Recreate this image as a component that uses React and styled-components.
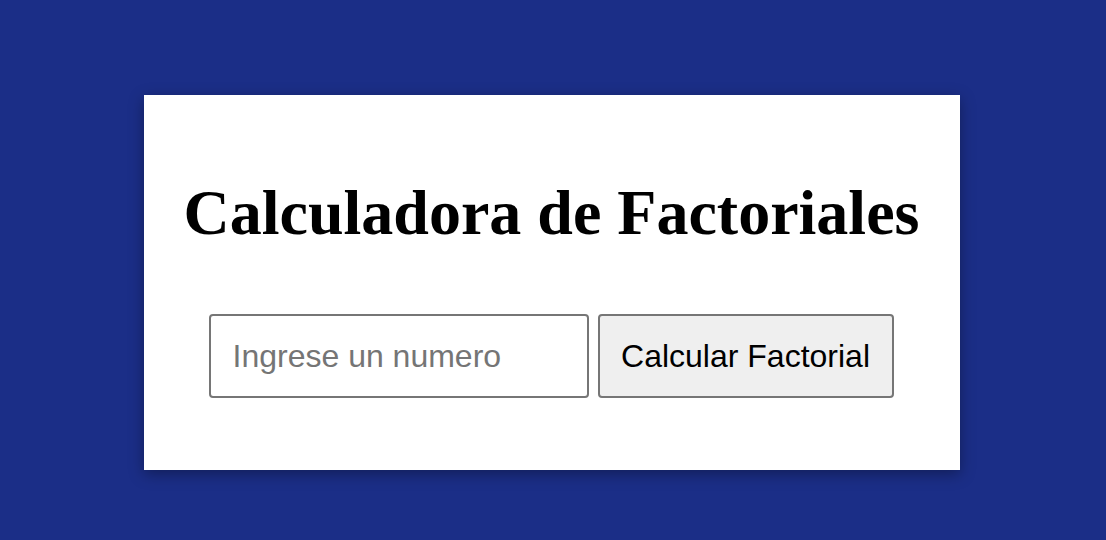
import React, { useState } from "react";
import styled, { createGlobalStyle } from "styled-components";

const GlobalStyle = createGlobalStyle`
  html, body {
    margin: 0;
    padding: 0;
    background-color: #1b2e87;
  }
`;

const Page = styled.div`
  min-height: 540px;
  display: flex;
  justify-content: center;
  align-items: flex-start;
  padding: 95px 2px 0 0;
  box-sizing: border-box;
`;

const Card = styled.div`
  width: 816px;
  height: 375px;
  background: #ffffff;
  box-shadow: 0 4px 14px rgba(0, 0, 0, 0.35);
  display: flex;
  flex-direction: column;
  align-items: center;
  box-sizing: border-box;
  padding-top: 78px;
`;

const Title = styled.h1`
  margin: 0 0 0 -1px;
  font-family: "Liberation Serif", "Times New Roman", serif;
  font-weight: bold;
  font-size: 64px;
  line-height: 80px;
  color: #000;
`;

const Form = styled.div`
  display: flex;
  gap: 9px;
  margin: 61px 0 0 -2px;
`;

const Input = styled.input`
  width: 380px;
  height: 84px;
  box-sizing: border-box;
  border: 2px solid #767676;
  border-radius: 4px;
  padding: 0 22px;
  font-family: "Liberation Sans", Arial, sans-serif;
  font-size: 32px;
  color: #000;
  outline: none;
  &::placeholder {
    color: #757575;
  }
`;

const Button = styled.button`
  width: 296px;
  height: 84px;
  box-sizing: border-box;
  border: 2px solid #767676;
  border-radius: 4px;
  background: #efefef;
  font-family: "Liberation Sans", Arial, sans-serif;
  font-size: 32px;
  color: #000;
  padding: 0;
`;

export default function App() {
  const [value, setValue] = useState("");
  return (
    <>
      <GlobalStyle />
      <Page>
        <Card>
          <Title>Calculadora de Factoriales</Title>
          <Form>
            <Input
              type="number"
              placeholder="Ingrese un numero"
              value={value}
              onChange={(e) => setValue(e.target.value)}
            />
            <Button>Calcular Factorial</Button>
          </Form>
        </Card>
      </Page>
    </>
  );
}
